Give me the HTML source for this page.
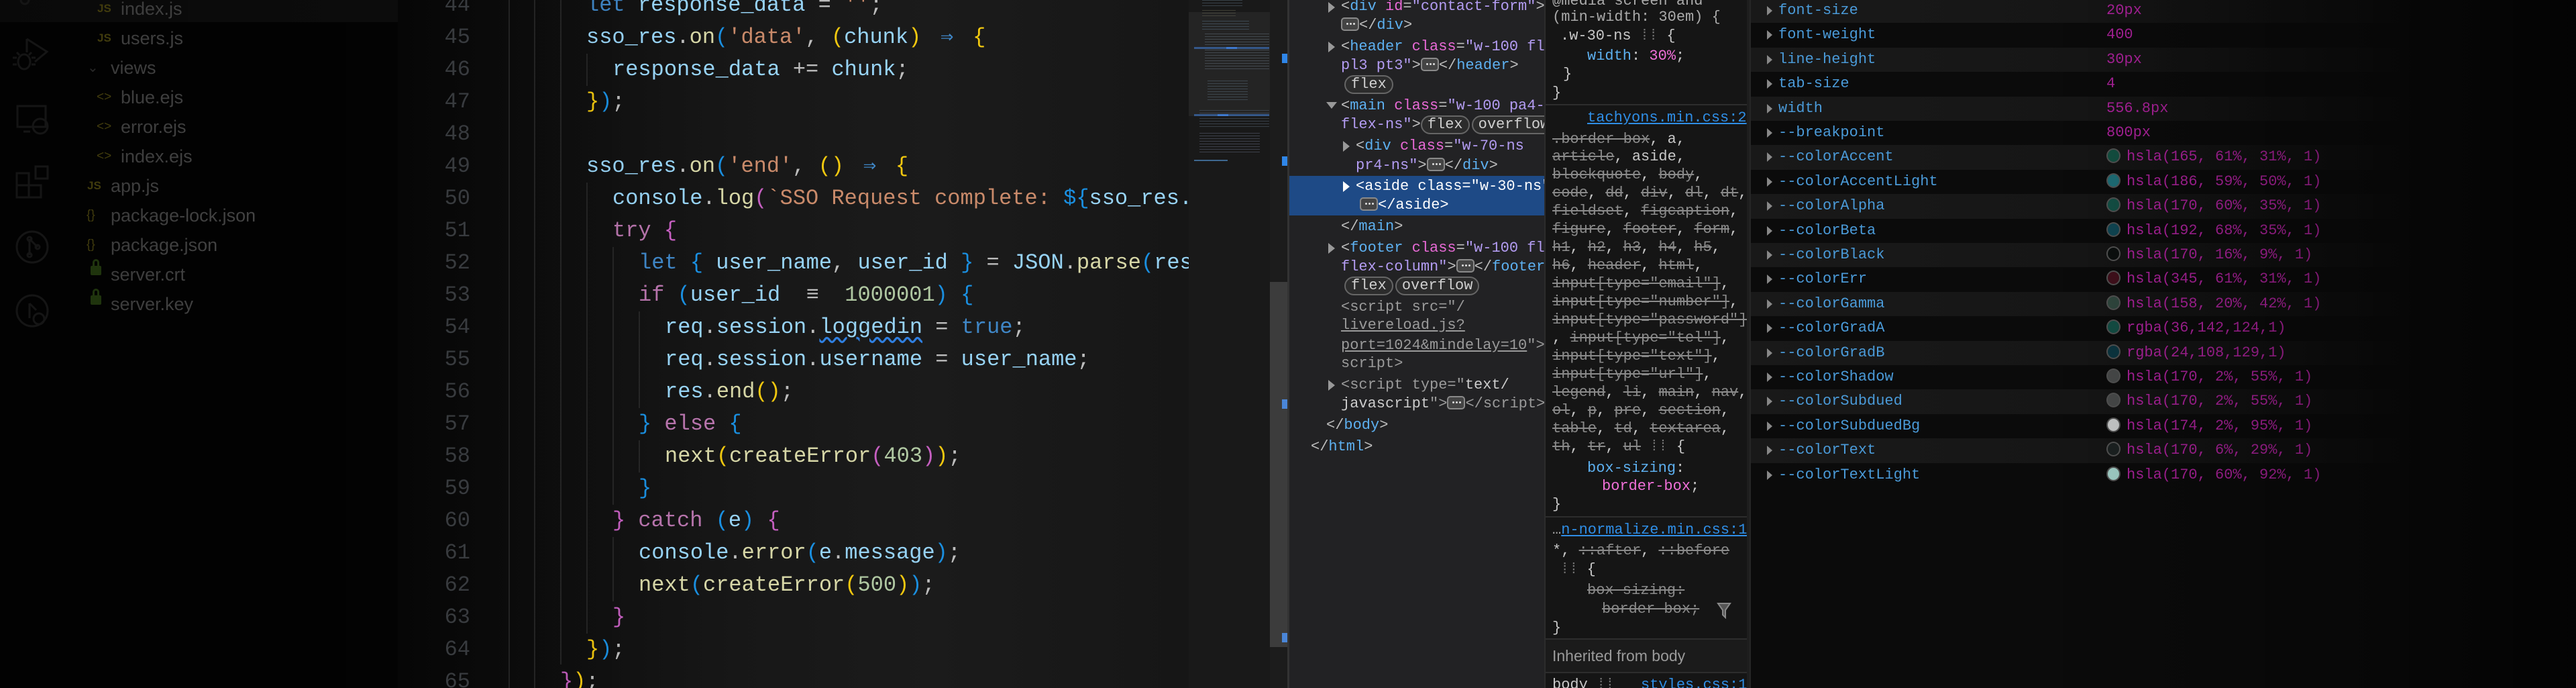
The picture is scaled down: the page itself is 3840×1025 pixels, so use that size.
<!DOCTYPE html>
<html><head><meta charset="utf-8">
<style>
*{margin:0;padding:0;box-sizing:border-box}
body{width:3840px;height:1025px;overflow:hidden;background:#000;position:relative;font-family:"Liberation Mono",monospace}
.abs{position:absolute}
.side{left:0;top:0;width:593px;height:1025px;background:#030303}
.fi{position:absolute;font-family:"Liberation Sans",sans-serif;font-size:27px;line-height:44px;color:#555;white-space:nowrap}
.ic{position:absolute;font-family:"Liberation Sans",sans-serif;font-weight:bold;font-size:19px;line-height:44px;color:#5c5412}
.ed{left:593px;top:0;width:1179px;height:1025px;background:linear-gradient(90deg,#070707 0,#0d0d0d 200px,#171717 500px,#1b1b1b 800px,#161616 1179px);overflow:hidden}
.ln{position:absolute;left:0;width:108px;text-align:right;font-size:32px;line-height:48px;color:#3f4246}
.cl{position:absolute;font-size:32px;line-height:48px;white-space:pre;color:#9cdcfe}
.g{position:absolute;width:2px;background:#262626}
.k{color:#3f86c6}.v{color:#97d3f5}.f{color:#d6d6a6}.s{color:#c98a6a}.p{color:#b774ac}.n{color:#b0c8a2}.o{color:#bdbdbd}.y{color:#f2c80f}.m{color:#c55fc0}.b{color:#1a8fe0}
.lig{display:inline-block;width:2ch;text-align:center}
.el{left:1922px;top:0;width:380px;height:1025px;background:#222224;overflow:hidden}
.e{position:absolute;font-size:22px;line-height:28px;white-space:pre;color:#bdbdbd}
.t{color:#5db0f0}.a{color:#e86ad6}.av{color:#b39cf2}.dim{color:#9a9a9a}
.dot{display:inline-block;width:27px;height:20px;border:2px solid #8a8a8a;border-radius:5px;background:#444;vertical-align:-3px;position:relative}
.dot:after{content:"";position:absolute;left:6px;top:6px;width:3px;height:3px;background:#ddd;box-shadow:5px 0 #ddd,10px 0 #ddd;border-radius:50%}
.bd{display:inline-block;height:28px;line-height:24px;border:2px solid #666;border-radius:14px;background:#2c2c2c;color:#d0d0d0;padding:0 8px;margin-right:3px}
.st{left:2302px;top:0;width:306px;height:1025px;background:#151515;border-left:2px solid #2c2c2c;overflow:hidden}
.sl{position:absolute;font-size:22px;line-height:27px;white-space:pre;color:#c8c8c8}
.x{text-decoration:line-through;color:#8a8a8a}
.sep{position:absolute;left:0;width:306px;height:2px;background:#2d2d2d}
.lk{color:#2f8ee6;text-decoration:underline}
.cp{left:2608px;top:0;width:1232px;height:1025px;background:#0b0b0b;border-left:2px solid #262626;overflow:hidden}
.row{position:absolute;left:0;width:1232px;height:36.4px}
.row.alt{background:linear-gradient(90deg,#191919 0,#161616 500px,#101010 800px,rgba(0,0,0,0) 1000px)}
.nm{position:absolute;left:41px;font-size:22px;line-height:36px;color:#4a9ad8}
.tri{position:absolute;left:24px;top:11px;width:0;height:0;border-left:8px solid #888;border-top:7px solid transparent;border-bottom:7px solid transparent}
.val{position:absolute;left:530px;font-size:22px;line-height:36px;color:#b0229f;white-space:pre}
.sw{display:inline-block;width:21px;height:22px;border-radius:50%;border:2px solid #555;vertical-align:-4px;margin-right:9px}
.mm{position:absolute;opacity:0.6}
</style></head><body>

<div class="abs side">
  <div class="abs" style="left:0;top:0;width:593px;height:33px;background:#0e0e0e"></div>
  <svg class="abs" style="left:0;top:0" width="110" height="500" fill="none" stroke="#1f1f1f" stroke-width="3">
    <circle cx="37" cy="0" r="6"/>
    <path d="M40 58 L70 77 L52 92 M40 58 L40 78"/>
    <ellipse cx="36" cy="92" rx="9" ry="11"/><path d="M25 86h-6M25 96h-6M47 86h6M47 96h6M29 82l-4-4M43 82l4-4"/>
    <rect x="26" y="158" width="42" height="31"/><path d="M35 196h10"/><circle cx="60" cy="188" r="11"/>
    <rect x="25" y="258" width="18" height="18"/><rect x="25" y="276" width="18" height="18"/><rect x="43" y="276" width="18" height="18"/><rect x="53" y="248" width="18" height="18"/>
    <circle cx="48" cy="368" r="23"/><circle cx="44" cy="356" r="3"/><circle cx="56" cy="368" r="3"/><circle cx="44" cy="380" r="3"/><path d="M44 356v24M44 356l12 12"/>
    <circle cx="48" cy="463" r="23"/><circle cx="58" cy="475" r="8"/><path d="M44 452v22M44 452l10 10"/>
  </svg>
  <div class="ic" style="left:145px;top:-9px;font-size:17px">JS</div><div class="fi" style="left:180px;top:-9px">index.js</div>
  <div class="ic" style="left:145px;top:35px;font-size:17px">JS</div><div class="fi" style="left:180px;top:35px">users.js</div>
  <div class="fi" style="left:130px;top:79px;font-size:20px;color:#3a3a3a">&#8964;</div><div class="fi" style="left:165px;top:79px">views</div>
  <div class="ic" style="left:144px;top:123px;font-weight:normal">&lt;&gt;</div><div class="fi" style="left:180px;top:123px">blue.ejs</div>
  <div class="ic" style="left:144px;top:167px;font-weight:normal">&lt;&gt;</div><div class="fi" style="left:180px;top:167px">error.ejs</div>
  <div class="ic" style="left:144px;top:211px;font-weight:normal">&lt;&gt;</div><div class="fi" style="left:180px;top:211px">index.ejs</div>
  <div class="ic" style="left:130px;top:255px;font-size:17px">JS</div><div class="fi" style="left:165px;top:255px">app.js</div>
  <div class="ic" style="left:129px;top:299px;font-weight:normal">{}</div><div class="fi" style="left:165px;top:299px">package-lock.json</div>
  <div class="ic" style="left:129px;top:343px;font-weight:normal">{}</div><div class="fi" style="left:165px;top:343px">package.json</div>
  <div class="abs" style="left:135px;top:396px;width:16px;height:14px;background:#2c4a12;border-radius:2px"></div><div class="abs" style="left:138px;top:386px;width:10px;height:12px;border:3px solid #2c4a12;border-bottom:none;border-radius:5px 5px 0 0"></div><div class="fi" style="left:165px;top:387px">server.crt</div>
  <div class="abs" style="left:135px;top:440px;width:16px;height:14px;background:#2c4a12;border-radius:2px"></div><div class="abs" style="left:138px;top:430px;width:10px;height:12px;border:3px solid #2c4a12;border-bottom:none;border-radius:5px 5px 0 0"></div><div class="fi" style="left:165px;top:431px">server.key</div>
</div>

<div class="abs ed">
  <div class="ln" style="top:-16px">44</div><div class="ln" style="top:32px">45</div><div class="ln" style="top:80px">46</div><div class="ln" style="top:128px">47</div><div class="ln" style="top:176px">48</div><div class="ln" style="top:224px">49</div><div class="ln" style="top:272px">50</div><div class="ln" style="top:320px">51</div><div class="ln" style="top:368px">52</div><div class="ln" style="top:416px">53</div><div class="ln" style="top:464px">54</div><div class="ln" style="top:512px">55</div><div class="ln" style="top:560px">56</div><div class="ln" style="top:608px">57</div><div class="ln" style="top:656px">58</div><div class="ln" style="top:704px">59</div><div class="ln" style="top:752px">60</div><div class="ln" style="top:800px">61</div><div class="ln" style="top:848px">62</div><div class="ln" style="top:896px">63</div><div class="ln" style="top:944px">64</div><div class="ln" style="top:992px">65</div>

  <div class="g" style="left:165px;top:0;height:1025px"></div>
  <div class="g" style="left:203px;top:0;height:1025px"></div>
  <div class="g" style="left:242px;top:0;height:990px"></div>
  <div class="g" style="left:281px;top:80px;height:48px"></div>
  <div class="g" style="left:281px;top:272px;height:672px"></div>
  <div class="g" style="left:320px;top:368px;height:384px"></div>
  <div class="g" style="left:320px;top:800px;height:96px"></div>
  <div class="g" style="left:359px;top:464px;height:144px"></div>
  <div class="g" style="left:359px;top:656px;height:48px"></div>

  <div class="cl" style="left:281px;top:-16px"><span class="k">let</span> <span class="v">response_data</span> <span class="o">=</span> <span class="s">''</span><span class="o">;</span></div>
  <div class="cl" style="left:281px;top:32px"><span class="v">sso_res</span><span class="o">.</span><span class="f">on</span><span class="b">(</span><span class="s">'data'</span><span class="o">,</span> <span class="y">(</span><span class="v">chunk</span><span class="y">)</span> <span class="k lig">⇒</span> <span class="y">{</span></div>
  <div class="cl" style="left:320px;top:80px"><span class="v">response_data</span> <span class="o">+=</span> <span class="v">chunk</span><span class="o">;</span></div>
  <div class="cl" style="left:281px;top:128px"><span class="y">}</span><span class="b">)</span><span class="o">;</span></div>
  <div class="cl" style="left:281px;top:224px"><span class="v">sso_res</span><span class="o">.</span><span class="f">on</span><span class="b">(</span><span class="s">'end'</span><span class="o">,</span> <span class="y">()</span> <span class="k lig">⇒</span> <span class="y">{</span></div>
  <div class="cl" style="left:320px;top:272px"><span class="v">console</span><span class="o">.</span><span class="f">log</span><span class="m">(</span><span class="s">`SSO Request complete: </span><span class="b">${</span><span class="v">sso_res.statusCode</span></div>
  <div class="cl" style="left:320px;top:320px"><span class="p">try</span> <span class="m">{</span></div>
  <div class="cl" style="left:359px;top:368px"><span class="k">let</span> <span class="b">{</span> <span class="v">user_name</span><span class="o">,</span> <span class="v">user_id</span> <span class="b">}</span> <span class="o">=</span> <span class="v">JSON</span><span class="o">.</span><span class="f">parse</span><span class="b">(</span><span class="v">response_data</span></div>
  <div class="cl" style="left:359px;top:416px"><span class="p">if</span> <span class="b">(</span><span class="v">user_id</span> <span class="o lig" style="width:3ch">≡</span> <span class="n">1000001</span><span class="b">)</span> <span class="b">{</span></div>
  <div class="cl" style="left:398px;top:464px"><span class="v">req</span><span class="o">.</span><span class="v">session</span><span class="o">.</span><span class="v" style="text-decoration:underline wavy #2f7fe0;text-underline-offset:6px">loggedin</span> <span class="o">=</span> <span class="k">true</span><span class="o">;</span></div>
  <div class="cl" style="left:398px;top:512px"><span class="v">req</span><span class="o">.</span><span class="v">session</span><span class="o">.</span><span class="v">username</span> <span class="o">=</span> <span class="v">user_name</span><span class="o">;</span></div>
  <div class="cl" style="left:398px;top:560px"><span class="v">res</span><span class="o">.</span><span class="f">end</span><span class="y">()</span><span class="o">;</span></div>
  <div class="cl" style="left:359px;top:608px"><span class="b">}</span> <span class="p">else</span> <span class="b">{</span></div>
  <div class="cl" style="left:398px;top:656px"><span class="f">next</span><span class="y">(</span><span class="f">createError</span><span class="m">(</span><span class="n">403</span><span class="m">)</span><span class="y">)</span><span class="o">;</span></div>
  <div class="cl" style="left:359px;top:704px"><span class="b">}</span></div>
  <div class="cl" style="left:320px;top:752px"><span class="m">}</span> <span class="p">catch</span> <span class="b">(</span><span class="v">e</span><span class="b">)</span> <span class="m">{</span></div>
  <div class="cl" style="left:359px;top:800px"><span class="v">console</span><span class="o">.</span><span class="f">error</span><span class="b">(</span><span class="v">e</span><span class="o">.</span><span class="v">message</span><span class="b">)</span><span class="o">;</span></div>
  <div class="cl" style="left:359px;top:848px"><span class="f">next</span><span class="b">(</span><span class="f">createError</span><span class="y">(</span><span class="n">500</span><span class="y">)</span><span class="b">)</span><span class="o">;</span></div>
  <div class="cl" style="left:320px;top:896px"><span class="m">}</span></div>
  <div class="cl" style="left:281px;top:944px"><span class="y">}</span><span class="b">)</span><span class="o">;</span></div>
  <div class="cl" style="left:242px;top:992px"><span class="m">}</span><span class="y">)</span><span class="o">;</span></div>
</div>

<div class="abs" style="left:1772px;top:0;width:121px;height:1025px;background:#191919"></div>
<div class="abs" style="left:1772px;top:18px;width:121px;height:155px;background:#242424"></div>
<div class="mm" style="left:1792px;top:0;width:60px;height:10px;background:repeating-linear-gradient(180deg,#4a5a66 0 1px,transparent 1px 4px)"></div>
<div class="mm" style="left:1792px;top:15px;width:50px;height:10px;background:repeating-linear-gradient(180deg,#5a5a4a 0 1px,transparent 1px 4px)"></div>
<div class="mm" style="left:1792px;top:31px;width:70px;height:14px;background:repeating-linear-gradient(180deg,#4c6070 0 1px,transparent 1px 4px)"></div>
<div class="mm" style="left:1796px;top:50px;width:96px;height:56px;background:repeating-linear-gradient(180deg,#56606a 0 1px,transparent 1px 4px)"></div>
<div class="abs" style="left:1780px;top:70px;width:112px;height:3px;background:#35588a"></div>
<div class="abs" style="left:1828px;top:70px;width:16px;height:3px;background:#3f7ad0"></div>
<div class="mm" style="left:1800px;top:120px;width:60px;height:30px;background:repeating-linear-gradient(180deg,#4e5c68 0 1px,transparent 1px 4px)"></div>
<div class="mm" style="left:1788px;top:164px;width:104px;height:26px;background:repeating-linear-gradient(180deg,#4c5866 0 1px,transparent 1px 4px)"></div>
<div class="abs" style="left:1780px;top:170px;width:112px;height:3px;background:#35588a"></div>
<div class="abs" style="left:1815px;top:170px;width:16px;height:3px;background:#3f7ad0"></div>
<div class="mm" style="left:1788px;top:198px;width:90px;height:32px;background:repeating-linear-gradient(180deg,#54586a 0 1px,transparent 1px 4px)"></div>
<div class="abs" style="left:1780px;top:238px;width:50px;height:2px;background:#3e6890"></div>
<div class="abs" style="left:1893px;top:0;width:27px;height:1025px;background:#1c1c1c"></div>
<div class="abs" style="left:1893px;top:420px;width:27px;height:544px;background:#3c3c3c"></div>
<div class="abs" style="left:1911px;top:80px;width:9px;height:14px;background:#2f86e8"></div>
<div class="abs" style="left:1911px;top:233px;width:9px;height:14px;background:#2f86e8"></div>
<div class="abs" style="left:1911px;top:595px;width:9px;height:14px;background:#4a86d8"></div>
<div class="abs" style="left:1911px;top:943px;width:9px;height:14px;background:#4a86d8"></div>
<div class="abs" style="left:1919px;top:0;width:3px;height:1025px;background:#333"></div>

<div class="abs el">
  <div class="abs" style="left:0;top:262px;width:380px;height:59px;background:#1e4a86"></div>
  <div class="abs" style="left:58px;top:3px;border-left:10px solid #999;border-top:8px solid transparent;border-bottom:8px solid transparent"></div>
  <div class="e" style="left:77px;top:-4px"><span>&lt;</span><span class="t">div</span> <span class="a">id</span>=<span class="av">"contact-form"</span>&gt;</div>
  <div class="e" style="left:77px;top:24px"><span class="dot"></span>&lt;/<span class="t">div</span>&gt;</div>
  <div class="abs" style="left:58px;top:62px;border-left:10px solid #999;border-top:8px solid transparent;border-bottom:8px solid transparent"></div>
  <div class="e" style="left:77px;top:56px">&lt;<span class="t">header</span> <span class="a">class</span>=<span class="av">"w-100 flex</span></div>
  <div class="e" style="left:77px;top:84px"><span class="av">pl3 pt3"</span>&gt;<span class="dot"></span>&lt;/<span class="t">header</span>&gt;</div>
  <div class="e" style="left:82px;top:112px"><span class="bd">flex</span></div>
  <div class="abs" style="left:55px;top:152px;border-top:10px solid #999;border-left:8px solid transparent;border-right:8px solid transparent"></div>
  <div class="e" style="left:77px;top:144px">&lt;<span class="t">main</span> <span class="a">class</span>=<span class="av">"w-100 pa4-</span></div>
  <div class="e" style="left:77px;top:172px"><span class="av">flex-ns"</span>&gt;<span class="bd">flex</span><span class="bd">overflow</span></div>
  <div class="abs" style="left:80px;top:210px;border-left:10px solid #999;border-top:8px solid transparent;border-bottom:8px solid transparent"></div>
  <div class="e" style="left:99px;top:204px">&lt;<span class="t">div</span> <span class="a">class</span>=<span class="av">"w-70-ns</span></div>
  <div class="e" style="left:99px;top:233px"><span class="av">pr4-ns"</span>&gt;<span class="dot"></span>&lt;/<span class="t">div</span>&gt;</div>
  <div class="abs" style="left:80px;top:270px;border-left:10px solid #fff;border-top:8px solid transparent;border-bottom:8px solid transparent"></div>
  <div class="e" style="left:99px;top:264px;color:#fff">&lt;aside class="w-30-ns"</div>
  <div class="e" style="left:105px;top:292px;color:#fff"><span class="dot"></span>&lt;/aside&gt;</div>
  <div class="e" style="left:77px;top:324px">&lt;/<span class="t">main</span>&gt;</div>
  <div class="abs" style="left:58px;top:362px;border-left:10px solid #999;border-top:8px solid transparent;border-bottom:8px solid transparent"></div>
  <div class="e" style="left:77px;top:356px">&lt;<span class="t">footer</span> <span class="a">class</span>=<span class="av">"w-100 flex</span></div>
  <div class="e" style="left:77px;top:384px"><span class="av">flex-column"</span>&gt;<span class="dot"></span>&lt;/<span class="t">footer</span>&gt;</div>
  <div class="e" style="left:82px;top:412px"><span class="bd">flex</span><span class="bd">overflow</span></div>
  <div class="e dim" style="left:77px;top:444px">&lt;script src="/</div>
  <div class="e dim" style="left:77px;top:471px;text-decoration:underline">livereload.js?</div>
  <div class="e dim" style="left:77px;top:501px"><u>port=1024&amp;mindelay=10</u>"&gt;&lt;/</div>
  <div class="e dim" style="left:77px;top:528px">script&gt;</div>
  <div class="abs" style="left:58px;top:566px;border-left:10px solid #999;border-top:8px solid transparent;border-bottom:8px solid transparent"></div>
  <div class="e dim" style="left:77px;top:560px">&lt;script type="<span style="color:#ccc">text/</span></div>
  <div class="e dim" style="left:77px;top:588px"><span style="color:#ccc">javascript</span>"&gt;<span class="dot"></span>&lt;/script&gt;</div>
  <div class="e" style="left:55px;top:620px">&lt;/<span class="t">body</span>&gt;</div>
  <div class="e" style="left:32px;top:652px">&lt;/<span class="t">html</span>&gt;</div>
</div>

<div class="abs st">
  <div class="sl" style="left:10px;top:-12px;color:#aaa">@media screen and</div>
  <div class="sl" style="left:10px;top:12px;color:#aaa">(min-width: 30em) {</div>
  <div class="sl" style="left:22px;top:40px">.w-30-ns <span style="color:#777">⁞⁞</span> {</div>
  <div class="sl" style="left:62px;top:70px"><span style="color:#5db0f0">width</span>: <span style="color:#f070d8">30%</span>;</div>
  <div class="sl" style="left:26px;top:97px">}</div>
  <div class="sl" style="left:10px;top:125px">}</div>
  <div class="sep" style="top:155px"></div>
  <div class="sl lk" style="left:62px;top:162px">tachyons.min.css:2</div>
  <div class="sl" style="left:10px;top:194px"><span class="x">.border-box</span>, a,</div>
  <div class="sl" style="left:10px;top:220px"><span class="x">article</span>, aside,</div>
  <div class="sl" style="left:10px;top:247px"><span class="x">blockquote</span>, <span class="x">body</span>,</div>
  <div class="sl" style="left:10px;top:274px"><span class="x">code</span>, <span class="x">dd</span>, <span class="x">div</span>, <span class="x">dl</span>, <span class="x">dt</span>,</div>
  <div class="sl" style="left:10px;top:301px"><span class="x">fieldset</span>, <span class="x">figcaption</span>,</div>
  <div class="sl" style="left:10px;top:328px"><span class="x">figure</span>, <span class="x">footer</span>, <span class="x">form</span>,</div>
  <div class="sl" style="left:10px;top:355px"><span class="x">h1</span>, <span class="x">h2</span>, <span class="x">h3</span>, <span class="x">h4</span>, <span class="x">h5</span>,</div>
  <div class="sl" style="left:10px;top:382px"><span class="x">h6</span>, <span class="x">header</span>, <span class="x">html</span>,</div>
  <div class="sl" style="left:10px;top:409px"><span class="x">input[type="email"]</span>,</div>
  <div class="sl" style="left:10px;top:436px"><span class="x">input[type="number"]</span>,</div>
  <div class="sl" style="left:10px;top:463px"><span class="x">input[type="password"]</span></div>
  <div class="sl" style="left:10px;top:490px">, <span class="x">input[type="tel"]</span>,</div>
  <div class="sl" style="left:10px;top:517px"><span class="x">input[type="text"]</span>,</div>
  <div class="sl" style="left:10px;top:544px"><span class="x">input[type="url"]</span>,</div>
  <div class="sl" style="left:10px;top:571px"><span class="x">legend</span>, <span class="x">li</span>, <span class="x">main</span>, <span class="x">nav</span>,</div>
  <div class="sl" style="left:10px;top:598px"><span class="x">ol</span>, <span class="x">p</span>, <span class="x">pre</span>, <span class="x">section</span>,</div>
  <div class="sl" style="left:10px;top:625px"><span class="x">table</span>, <span class="x">td</span>, <span class="x">textarea</span>,</div>
  <div class="sl" style="left:10px;top:652px"><span class="x">th</span>, <span class="x">tr</span>, <span class="x">ul</span> <span style="color:#777">⁞⁞</span> {</div>
  <div class="sl" style="left:62px;top:684px;color:#5db0f0">box-sizing<span style="color:#ccc">:</span></div>
  <div class="sl" style="left:84px;top:711px"><span style="color:#f070d8">border-box</span>;</div>
  <div class="sl" style="left:10px;top:738px">}</div>
  <div class="sep" style="top:769px"></div>
  <div class="sl" style="left:10px;top:776px"><span style="color:#aaa">…</span><span class="lk">n-normalize.min.css:1</span></div>
  <div class="sl" style="left:10px;top:807px">*, <span class="x">::after</span>, <span class="x">::before</span></div>
  <div class="sl" style="left:22px;top:835px"><span style="color:#777">⁞⁞</span> {</div>
  <div class="sl x" style="left:62px;top:866px">box-sizing:</div>
  <div class="sl x" style="left:84px;top:894px">border-box;</div>
  <svg class="abs" style="left:255px;top:896px" width="22" height="26"><path d="M2 3 L20 3 L13 13 L13 24 L9 20 L9 13 Z" fill="#555" stroke="#888" stroke-width="2"/></svg>
  <div class="sl" style="left:10px;top:922px">}</div>
  <div class="sep" style="top:951px"></div>
  <div class="abs" style="left:0;top:953px;width:306px;height:48px;background:#1b1b1b"></div>
  <div class="sl" style="left:10px;top:964px;font-family:'Liberation Sans',sans-serif;font-size:23px;color:#9a9a9a">Inherited from body</div>
  <div class="sep" style="top:1001px"></div>
  <div class="sl" style="left:10px;top:1007px">body <span style="color:#777">⁞⁞</span>   <span class="lk">styles.css:1</span></div>
</div>
<div class="abs" style="left:2604px;top:0;width:4px;height:1025px;background:#1e1e1e"></div>

<div class="abs cp">
  <div class="row alt" style="top:-2px"><div class="tri"></div><div class="nm">font-size</div><div class="val">20px</div></div>
  <div class="row" style="top:34.4px"><div class="tri"></div><div class="nm">font-weight</div><div class="val">400</div></div>
  <div class="row alt" style="top:70.8px"><div class="tri"></div><div class="nm">line-height</div><div class="val">30px</div></div>
  <div class="row" style="top:107.2px"><div class="tri"></div><div class="nm">tab-size</div><div class="val">4</div></div>
  <div class="row alt" style="top:143.6px"><div class="tri"></div><div class="nm">width</div><div class="val">556.8px</div></div>
  <div class="row" style="top:180px"><div class="tri"></div><div class="nm">--breakpoint</div><div class="val">800px</div></div>
  <div class="row alt" style="top:216.4px"><div class="tri"></div><div class="nm">--colorAccent</div><div class="val"><span class="sw" style="background:hsl(165,61%,20%)"></span>hsla(165, 61%, 31%, 1)</div></div>
  <div class="row" style="top:252.8px"><div class="tri"></div><div class="nm">--colorAccentLight</div><div class="val"><span class="sw" style="background:hsl(186,59%,30%)"></span>hsla(186, 59%, 50%, 1)</div></div>
  <div class="row alt" style="top:289.2px"><div class="tri"></div><div class="nm">--colorAlpha</div><div class="val"><span class="sw" style="background:hsl(170,60%,20%)"></span>hsla(170, 60%, 35%, 1)</div></div>
  <div class="row" style="top:325.6px"><div class="tri"></div><div class="nm">--colorBeta</div><div class="val"><span class="sw" style="background:hsl(192,68%,20%)"></span>hsla(192, 68%, 35%, 1)</div></div>
  <div class="row alt" style="top:362px"><div class="tri"></div><div class="nm">--colorBlack</div><div class="val"><span class="sw" style="background:hsl(170,16%,5%)"></span>hsla(170, 16%, 9%, 1)</div></div>
  <div class="row" style="top:398.4px"><div class="tri"></div><div class="nm">--colorErr</div><div class="val"><span class="sw" style="background:hsl(345,61%,16%)"></span>hsla(345, 61%, 31%, 1)</div></div>
  <div class="row alt" style="top:434.8px"><div class="tri"></div><div class="nm">--colorGamma</div><div class="val"><span class="sw" style="background:hsl(158,20%,24%)"></span>hsla(158, 20%, 42%, 1)</div></div>
  <div class="row" style="top:471.2px"><div class="tri"></div><div class="nm">--colorGradA</div><div class="val"><span class="sw" style="background:rgb(20,80,70)"></span>rgba(36,142,124,1)</div></div>
  <div class="row alt" style="top:507.6px"><div class="tri"></div><div class="nm">--colorGradB</div><div class="val"><span class="sw" style="background:rgb(12,55,66)"></span>rgba(24,108,129,1)</div></div>
  <div class="row" style="top:544px"><div class="tri"></div><div class="nm">--colorShadow</div><div class="val"><span class="sw" style="background:#4a4c4c"></span>hsla(170, 2%, 55%, 1)</div></div>
  <div class="row alt" style="top:580.4px"><div class="tri"></div><div class="nm">--colorSubdued</div><div class="val"><span class="sw" style="background:#4a4c4c"></span>hsla(170, 2%, 55%, 1)</div></div>
  <div class="row" style="top:616.8px"><div class="tri"></div><div class="nm">--colorSubduedBg</div><div class="val"><span class="sw" style="background:#d0d2d2"></span>hsla(174, 2%, 95%, 1)</div></div>
  <div class="row alt" style="top:653.2px"><div class="tri"></div><div class="nm">--colorText</div><div class="val"><span class="sw" style="background:#1c2222"></span>hsla(170, 6%, 29%, 1)</div></div>
  <div class="row" style="top:689.6px"><div class="tri"></div><div class="nm">--colorTextLight</div><div class="val"><span class="sw" style="background:#a8d8d0"></span>hsla(170, 60%, 92%, 1)</div></div>
</div>

<div class="abs" style="left:0;top:0;width:3840px;height:1025px;pointer-events:none;background:linear-gradient(90deg,rgba(0,0,0,0.35) 0,rgba(0,0,0,0.1) 700px,rgba(0,0,0,0) 1000px,rgba(0,0,0,0) 3000px,rgba(0,0,0,0.3) 3500px,rgba(0,0,0,0.7) 3840px)"></div>
</body></html>
